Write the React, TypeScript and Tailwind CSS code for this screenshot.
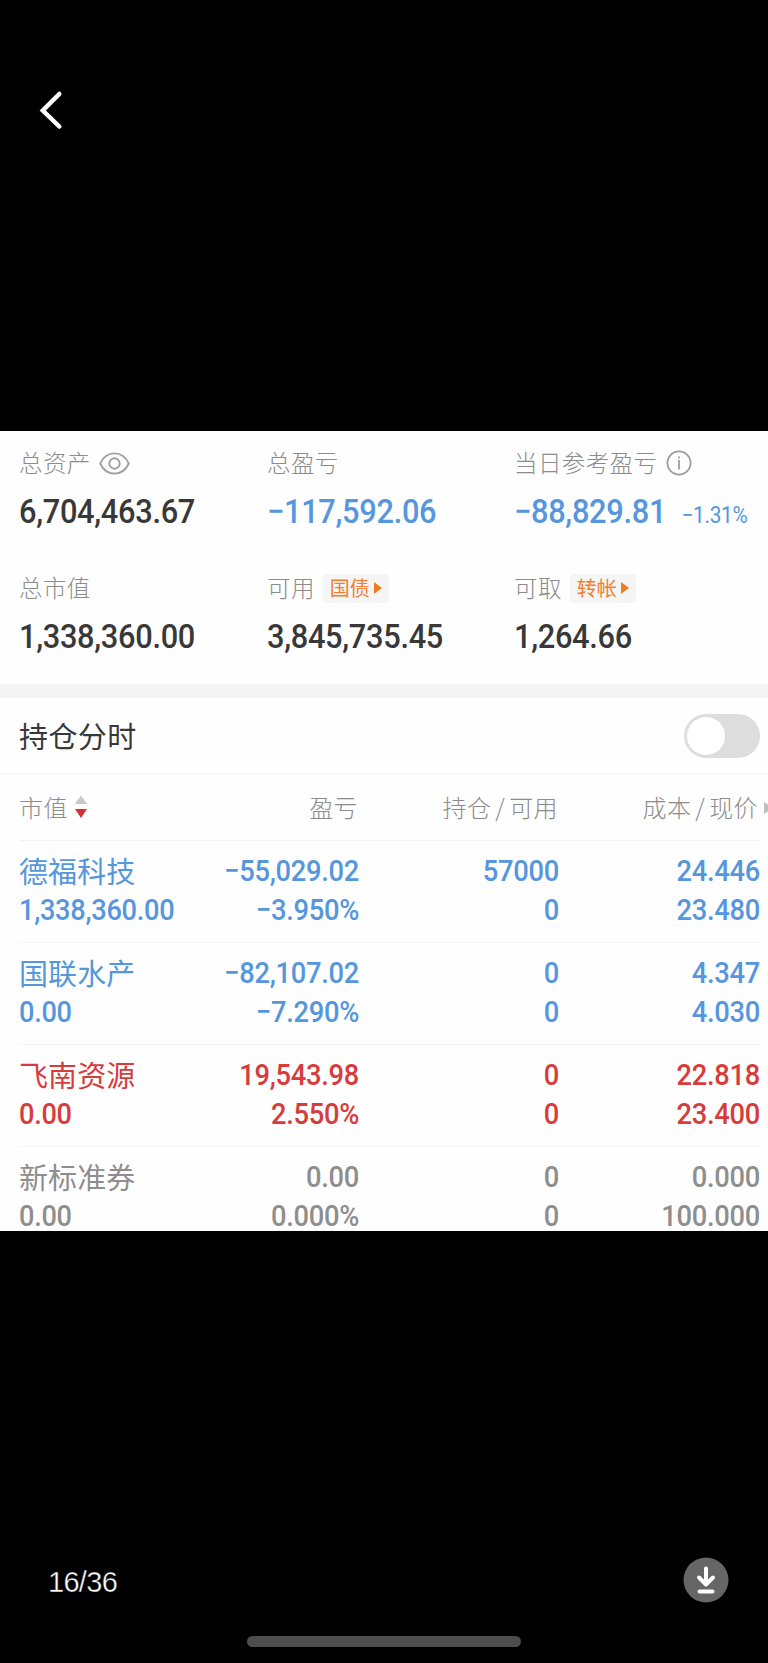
import type { ReactNode } from "react";

const CJK = "font-['Noto_Sans_CJK_SC',sans-serif]";
const NUM = "font-['Roboto','Noto_Sans_CJK_SC',sans-serif] tracking-[-0.01em]";

function EyeIcon() {
  return (
    <svg className="ml-[8px] h-[23px] w-[31px]" viewBox="0 0 31 23" fill="none" stroke="#a0a0a0" strokeWidth="1.9">
      <path d="M1.2 11.5C4.4 4.6 9.4 1.4 15.5 1.4s11.100 3.200 14.300 10.100C26.600 18.400 21.600 21.600 15.500 21.600S4.400 18.400 1.200 11.500Z" />
      <circle cx="15.500" cy="11.500" r="5.200" />
    </svg>
  );
}

function InfoIcon() {
  return (
    <svg className="ml-[9px] h-[26px] w-[26px]" viewBox="0 0 26 26" fill="none" stroke="#9a9a9a" strokeWidth="1.7">
      <circle cx="13" cy="13" r="11.600" />
      <path d="M13 10V19.500M13 6.500V8.500" />
    </svg>
  );
}

function Badge({ children }: { children: ReactNode }) {
  return (
    <span className="ml-[8px] flex h-[29px] w-[66px] items-center rounded-[4px] bg-[#f5f5f5] pl-[7px] text-[20px] font-normal leading-[29px] text-[#f08030]">
      <span className="-mt-[1px]">{children}</span>
      <svg className="ml-[4px] h-[12px] w-[8px]" viewBox="0 0 8 12" fill="#ee7c22">
        <path d="M0 0L8 6L0 12Z" />
      </svg>
    </span>
  );
}

function Stat({ label, extra, value, tone = "text-[#383838]", note }: { label: string; extra?: ReactNode; value: string; tone?: string; note?: string }) {
  return (
    <div className="flex flex-col gap-[12px]">
      <div className={`flex h-[36px] items-center whitespace-nowrap text-[23.500px] text-[#8c8c8c] ${CJK}`}>
        <span className="font-light tracking-[0.4px]">{label}</span>
        {extra}
      </div>
      <div className={`flex h-[36px] origin-left scale-x-[0.905] items-baseline whitespace-nowrap text-[34px] font-medium leading-[36px] ${NUM} ${tone}`}>
        <span>{value}</span>
        {note && <span className="ml-[17px] text-[23px] font-normal">{note}</span>}
      </div>
    </div>
  );
}

type Row = { name: string; tone: string; cells: [string, string][]; value: string };

const rows: Row[] = [
  { name: "德福科技", value: "1,338,360.00", tone: "text-[#5596dd]", cells: [["−55,029.02", "−3.950%"], ["57000", "0"], ["24.446", "23.480"]] },
  { name: "国联水产", value: "0.00", tone: "text-[#5596dd]", cells: [["−82,107.02", "−7.290%"], ["0", "0"], ["4.347", "4.030"]] },
  { name: "飞南资源", value: "0.00", tone: "text-[#d63c3c]", cells: [["19,543.98", "2.550%"], ["0", "0"], ["22.818", "23.400"]] },
  { name: "新标准券", value: "0.00", tone: "text-[#8e8e8e]", cells: [["0.00", "0.000%"], ["0", "0"], ["0.000", "100.000"]] },
];

const COLS = "grid grid-cols-[139px_201px_200px_201px]";

function Holding({ row }: { row: Row }) {
  return (
    <div className="ml-[19px] mr-[8px] h-[102px] border-b border-[#f5f5f5] last:h-[90px] last:border-b-0">
      <div className={`w-[741px] pt-[10px] text-[30px] font-medium leading-[39px] ${COLS} ${NUM} ${row.tone}`}>
        <div className="whitespace-nowrap">
          <div className={`h-[39px] text-[29px] font-normal leading-[38px] !tracking-[0.1px] ${CJK}`}>{row.name}</div>
          <div className="mt-[4px] origin-left scale-x-[0.905] leading-[31px]">{row.value}</div>
        </div>
        {row.cells.map(([top, bottom], i) => (
          <div key={i} className="origin-right scale-x-[0.91] whitespace-nowrap text-right">
            <div>{top}</div>
            <div className="mt-[4px] leading-[31px]">{bottom}</div>
          </div>
        ))}
      </div>
    </div>
  );
}

export default function App() {
  return (
    <div className="flex h-[1663px] w-[768px] flex-col overflow-hidden bg-black">
      <header className="h-[431px] shrink-0 pl-[38px] pt-[90px]">
        <svg className="h-[40px] w-[26px]" viewBox="0 0 26 40" fill="none" stroke="#fff" strokeWidth="4.5" strokeLinecap="round">
          <path d="M21.300 4L4.800 20.500L21.300 36.500" />
        </svg>
      </header>

      <main className="h-[800px] shrink-0 bg-[#fefefe]">
        <section className="grid h-[253px] grid-cols-[248px_247px_1fr] content-start gap-y-[41px] pl-[19px] pt-[14px]">
          <Stat label="总资产" extra={<EyeIcon />} value="6,704,463.67" />
          <Stat label="总盈亏" value="−117,592.06" tone="text-[#5596dd]" />
          <Stat label="当日参考盈亏" extra={<InfoIcon />} value="−88,829.81" tone="text-[#5596dd]" note="−1.31%" />
          <Stat label="总市值" value="1,338,360.00" />
          <Stat label="可用" extra={<Badge>国债</Badge>} value="3,845,735.45" />
          <Stat label="可取" extra={<Badge>转帐</Badge>} value="1,264.66" />
        </section>

        <div className="h-[14px] bg-[#f4f4f4]" />

        <section className={`flex h-[76px] items-center justify-between border-b border-[#f6f6f6] pl-[19px] pr-[8px] ${CJK}`}>
          <h2 className="-mt-[1px] text-[29px] leading-[40px] tracking-[0.4px] text-[#383838]">持仓分时</h2>
          <div className="flex h-[44px] w-[76px] items-center rounded-full bg-[#dddddd] pl-[3px]">
            <div className="h-[38px] w-[38px] rounded-full bg-white" />
          </div>
        </section>

        <div className={`ml-[19px] flex h-[67px] items-center text-[24px] font-light leading-[36px] text-[#8c8c8c] ${CJK}`}>
          <div className="flex h-full w-[741px] shrink-0 items-center border-b border-[#f3f3f3]">
            <div className="flex w-[138px] items-center">
              <span className="-mt-[1px] tracking-[0.4px]">市值</span>
              <svg className="ml-[7px] h-[24px] w-[12px]" viewBox="0 0 12 24">
                <path d="M6 0.500L12 9H0Z" fill="#c8c8c8" />
                <path d="M0 14H12L6 23Z" fill="#d63030" />
              </svg>
            </div>
            <span className="-mt-[1px] w-[201px] text-right tracking-[0.4px]">盈亏</span>
            <span className="-mt-[1px] w-[200px] text-right tracking-[0.4px]">持仓<span className="mx-[4px]">/</span>可用</span>
            <span className="-mt-[1px] w-[200px] text-right tracking-[0.4px]">成本<span className="mx-[4px]">/</span>现价</span>
          </div>
          <svg className="ml-[4px] h-[12px] w-[9px] shrink-0" viewBox="0 0 9 12" fill="#bdbdbd">
            <path d="M0 0L9 6L0 12Z" />
          </svg>
        </div>

        {rows.map((row) => (
          <Holding key={row.name} row={row} />
        ))}
      </main>

      <footer className="flex flex-1 flex-col justify-end">
        <div className="flex items-center justify-between pl-[48px] pr-[39px]">
          <span className="mt-[3px] font-['Liberation_Sans',sans-serif] text-[29px] leading-[40px] tracking-[-0.7px] text-white [-webkit-text-stroke:0.4px_black]">16/36</span>
          <svg className="h-[46px] w-[46px]" viewBox="0 0 46 46" fill="none" stroke="#fff" strokeWidth="4" strokeLinecap="round" strokeLinejoin="round">
            <circle cx="23" cy="23" r="22.500" fill="#666666" stroke="none" />
            <path d="M23 11.500V27M16 20.500L23 27.500L30 20.500M16.500 34.500H29.500" />
          </svg>
        </div>
        <div className="mb-[16px] mt-[33px] h-[11px] w-[274px] self-center rounded-full bg-[#4d4d4d]" />
      </footer>
    </div>
  );
}
